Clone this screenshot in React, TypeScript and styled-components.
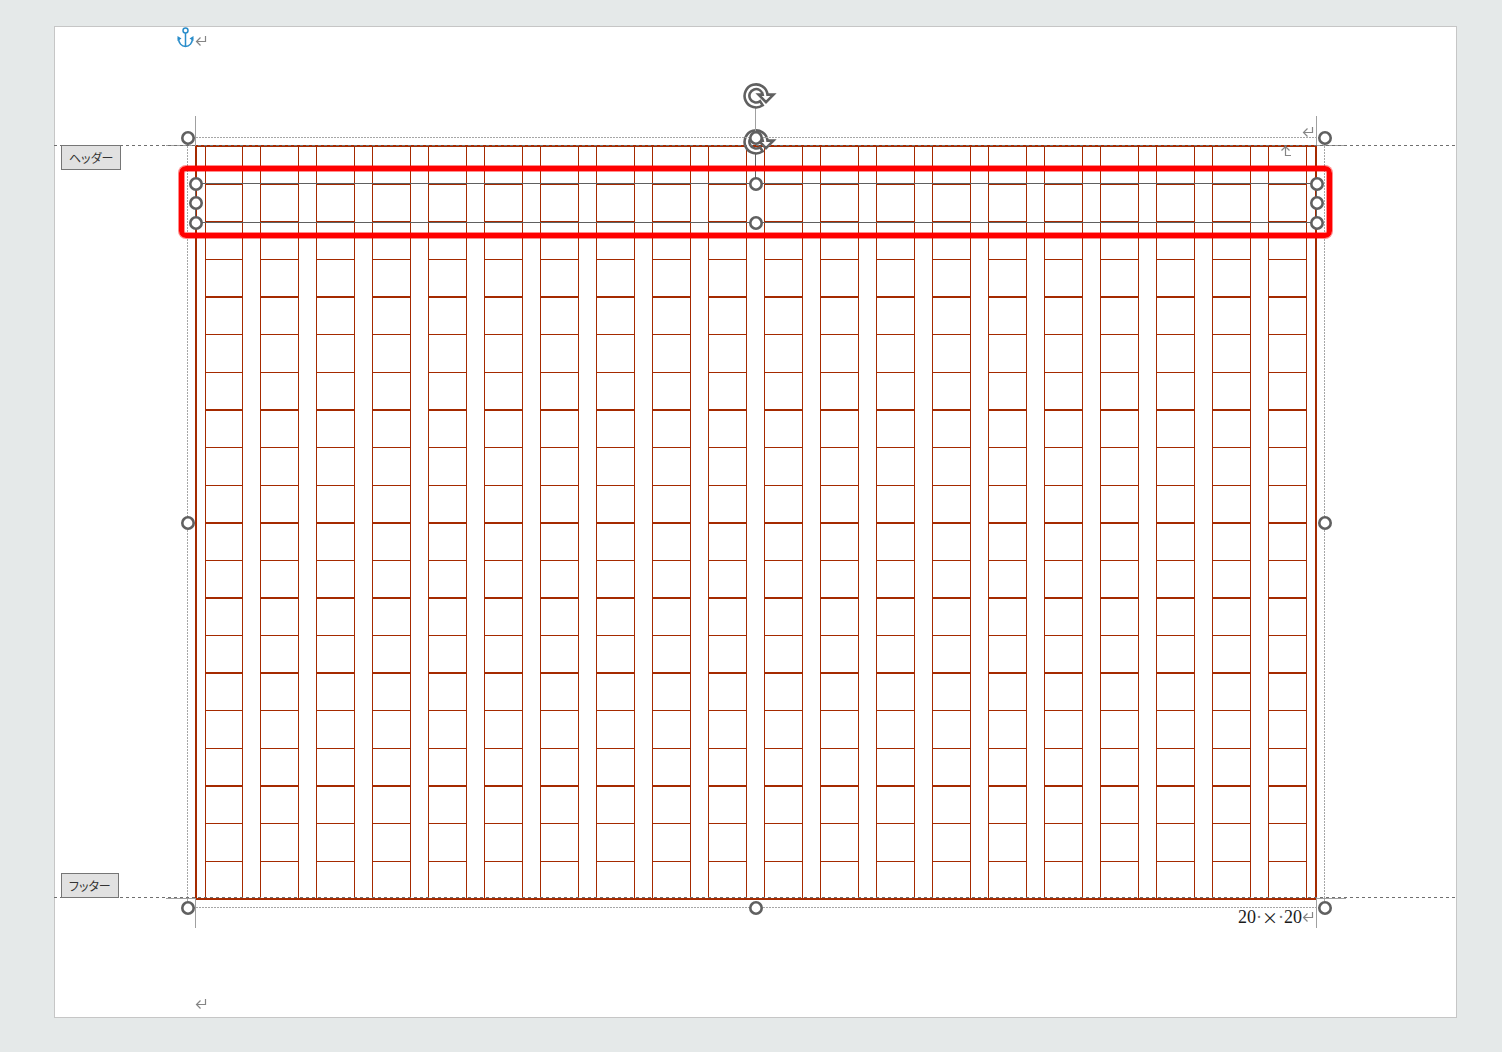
import React from 'react';
import styled, { createGlobalStyle, css } from 'styled-components';

const GlobalStyle = createGlobalStyle`
  *, *::before, *::after { box-sizing: border-box; }
  body {
    margin: 0;
    background: #e5e9e9;
    color: #1a1a1a;
    font-family: 'Liberation Serif', 'Noto Sans CJK JP', serif;
  }
`;

const INK = '#a52a00';
const GREY = '#606060';

const Workspace = styled.main`
  padding: 26px 45px 34px 54px;
`;

const Page = styled.article`
  display: flex;
  flex-direction: column;
  background: #fff;
  border: 1px solid #c6c6c6;
`;

const HeaderArea = styled.header`
  display: flex;
  flex-direction: column;
  justify-content: space-between;
  height: 118px;
  padding: 0 142px 7px 122px;
`;

const HeaderLine = styled.div<{ $end?: boolean }>`
  display: flex;
  align-items: center;
  justify-content: ${(p) => (p.$end ? 'flex-end' : 'flex-start')};
  gap: 1px;
`;

const FirstMark = styled.span`
  display: flex;
  padding-top: 6px;
`;

const BodyArea = styled.section`
  position: relative;
  padding: 0 139px 0 140px;
`;

const Boundary = styled.div<{ $bottom?: boolean }>`
  position: absolute;
  left: -1px;
  right: 0;
  ${(p) => (p.$bottom ? 'bottom: 2px;' : 'top: 0;')}
  height: 1px;
  background: repeating-linear-gradient(90deg, #707070 0 3px, transparent 3px 6px);
`;

const Tag = styled.span<{ $bottom?: boolean }>`
  position: absolute;
  left: 6px;
  ${(p) => (p.$bottom ? 'bottom: 2px;' : 'top: 0;')}
  height: 25px;
  padding: 0 7px;
  border: 1px solid #767676;
  background: #e1e1e1;
  color: #333;
  font: 12px/23px 'Noto Sans CJK JP', sans-serif;
  font-feature-settings: 'palt';
  white-space: nowrap;
`;

const Stage = styled.div`
  position: relative;
`;

const Manuscript = styled.div`
  display: grid;
  grid-template-columns: 38fr repeat(19, 39fr);
  column-gap: 17px;
  padding: 0 8px;
  border: 2px solid ${INK};
`;

const Column = styled.div`
  border: solid ${INK};
  border-width: 0 1px;
`;

const Cell = styled.div<{ $height: number; $line: number }>`
  height: ${(p) => p.$height}px;
  border-bottom: ${(p) => p.$line}px solid ${INK};
`;

const Corner = styled.i<{ $right?: boolean; $bottom?: boolean }>`
  position: absolute;
  width: 30px;
  height: 30px;
  ${(p) => (p.$right ? 'right: -29px; border-left: 1px solid #a0a0a0;' : 'left: -29px; border-right: 1px solid #a0a0a0;')}
  ${(p) => (p.$bottom ? 'bottom: -28px; border-top: 1px solid #a0a0a0;' : 'top: -29px; border-bottom: 1px solid #a0a0a0;')}
`;

const dotted = css`
  background:
    repeating-linear-gradient(90deg, #a6a6a6 0 2px, transparent 2px 3px) 0 0 / 100% 1px no-repeat,
    repeating-linear-gradient(90deg, #a6a6a6 0 2px, transparent 2px 3px) 0 100% / 100% 1px no-repeat,
    repeating-linear-gradient(180deg, #a6a6a6 0 2px, transparent 2px 3px) 0 0 / 1px 100% no-repeat,
    repeating-linear-gradient(180deg, #a6a6a6 0 2px, transparent 2px 3px) 100% 0 / 1px 100% no-repeat;
`;

const Selection = styled.div<{ $inner?: boolean }>`
  position: absolute;
  ${(p) => (p.$inner ? 'left: 1px; right: 0; top: 39px; height: 39px;' : 'inset: -7px -8px -8px -7px;')}
  &::before {
    content: '';
    position: absolute;
    inset: -1px 0 0 -1px;
    ${(p) => (p.$inner ? `border: 1px solid ${GREY};` : dotted)}
  }
`;

const HandleButton = styled.button<{ $x: number; $y: number }>`
  position: absolute;
  left: round(down, ${(p) => p.$x}%, 1px);
  top: round(down, ${(p) => p.$y}%, 1px);
  display: flex;
  width: 14px;
  height: 14px;
  margin: -7px 0 0 -7px;
  padding: 0;
  border: 0;
  border-radius: 50%;
  background: none;
`;

const RotateButton = styled.button`
  position: absolute;
  left: round(down, 50%, 1px);
  top: -56px;
  display: flex;
  margin-left: -13px;
  padding: 0;
  border: 0;
  background: none;
`;

const Stem = styled.i<{ $dark?: boolean }>`
  position: absolute;
  left: round(down, 50%, 1px);
  bottom: 100%;
  width: 1px;
  height: 30px;
  margin-left: -1px;
  background: ${(p) => (p.$dark ? GREY : '#a0a0a0')};
`;

const Highlight = styled.div`
  position: absolute;
  left: -16px;
  right: -15px;
  top: 21px;
  height: 72px;
  border: 5px solid #f00;
  border-radius: 7px;
  box-shadow: 0 0 0 1px rgba(255, 0, 0, 0.45), inset 0 0 0 1px rgba(255, 0, 0, 0.45);
`;

const FrameMark = styled.span`
  position: absolute;
  right: 25px;
  top: 0;
  display: flex;
  transform: rotate(90deg);
`;

const FooterArea = styled.footer`
  display: flex;
  flex-direction: column;
  justify-content: space-between;
  height: 117px;
  padding: 6px 142px 7px 140px;
`;

const Count = styled.p`
  display: flex;
  align-items: center;
  justify-content: flex-end;
  margin: 0;
  font-size: 18px;
  line-height: 22px;
`;

const Times = styled.span`
  font-family: 'Noto Sans CJK JP', sans-serif;
  font-size: 16px;
`;

const Space = styled.span`
  color: #777;
`;

const ROWS = [38, 37, 38, 38, 37, 38, 38, 37, 38, 38, 37, 38, 37, 38, 37, 38, 38, 37, 38, 36];
const HEAVY = [0, 3, 6, 9, 11, 13, 16];
const COLUMNS = Array.from({ length: 20 }, (_, i) => i);

const ReturnMark = () => (
  <svg width="12" height="12" viewBox="0 0 12 12" fill="none" stroke="#858585" strokeWidth="1.2" aria-hidden="true">
    <path d="M10.5 1v5.5H1.5M5.5 2.5l-4 4 4 4" />
  </svg>
);

const Anchor = () => (
  <svg width="17" height="22" viewBox="0 0 17 22" fill="none" stroke="#2a8dca" strokeWidth="1.5" aria-hidden="true">
    <circle cx="8.5" cy="3.5" r="2.5" />
    <path d="M8.5 6v14M1.5 11c0 5 3 8.5 7 8.5s7-3.5 7-8.5" />
    <path d="M.5 9l4 2.5L.5 14zM16.5 9l-4 2.5 4 2.5z" fill="#2a8dca" stroke="none" />
  </svg>
);

const Handle = ({ x, y }: { x: number; y: number }) => (
  <HandleButton type="button" aria-label="サイズ変更ハンドル" $x={x} $y={y}>
    <svg width="14" height="14" viewBox="0 0 14 14" aria-hidden="true">
      <circle cx="7" cy="7" r="5.7" fill="#fff" stroke={GREY} strokeWidth="2.6" />
    </svg>
  </HandleButton>
);

const Rotate = () => (
  <RotateButton type="button" aria-label="回転ハンドル">
    <svg width="34" height="28" viewBox="0 0 34 28" fill="none" aria-hidden="true">
      <path
        d="M19.7 23.3A11.5 11.5 0 1 1 24.5 12.6H30.5L23 20.2 15.5 12.6H19.7A6.7 6.7 0 1 0 17 19.2Z"
        fill="#fff"
        stroke={GREY}
        strokeWidth="2.6"
      />
    </svg>
  </RotateButton>
);

const HANDLES = [[0, 0], [50, 0], [100, 0], [0, 50], [100, 50], [0, 100], [50, 100], [100, 100]];

export default function App() {
  return (
    <>
      <GlobalStyle />
      <Workspace>
        <Page>
          <HeaderArea>
            <HeaderLine>
              <Anchor />
              <FirstMark><ReturnMark /></FirstMark>
            </HeaderLine>
            <HeaderLine $end><ReturnMark /></HeaderLine>
          </HeaderArea>
          <BodyArea>
            <Stage>
              <Manuscript>
                {COLUMNS.map((c) => (
                  <Column key={c}>
                    {ROWS.map((h, r) => (
                      <Cell key={r} $height={h} $line={r === 19 ? 0 : HEAVY.includes(r) ? 2 : 1} />
                    ))}
                  </Column>
                ))}
              </Manuscript>
              <Corner />
              <Corner $right />
              <Corner $bottom />
              <Corner $right $bottom />
              <FrameMark><ReturnMark /></FrameMark>
              <Selection $inner>
                <Stem $dark />
                <Rotate />
                {HANDLES.map(([x, y]) => <Handle key={`${x}-${y}`} x={x} y={y} />)}
              </Selection>
              <Selection>
                <Stem />
                <Rotate />
                {HANDLES.map(([x, y]) => <Handle key={`${x}-${y}`} x={x} y={y} />)}
              </Selection>
              <Highlight />
            </Stage>
            <Boundary />
            <Boundary $bottom />
            <Tag>ヘッダー</Tag>
            <Tag $bottom>フッター</Tag>
          </BodyArea>
          <FooterArea>
            <Count>
              20<Space>·</Space><Times>×</Times><Space>·</Space>20<ReturnMark />
            </Count>
            <HeaderLine><ReturnMark /></HeaderLine>
          </FooterArea>
        </Page>
      </Workspace>
    </>
  );
}
